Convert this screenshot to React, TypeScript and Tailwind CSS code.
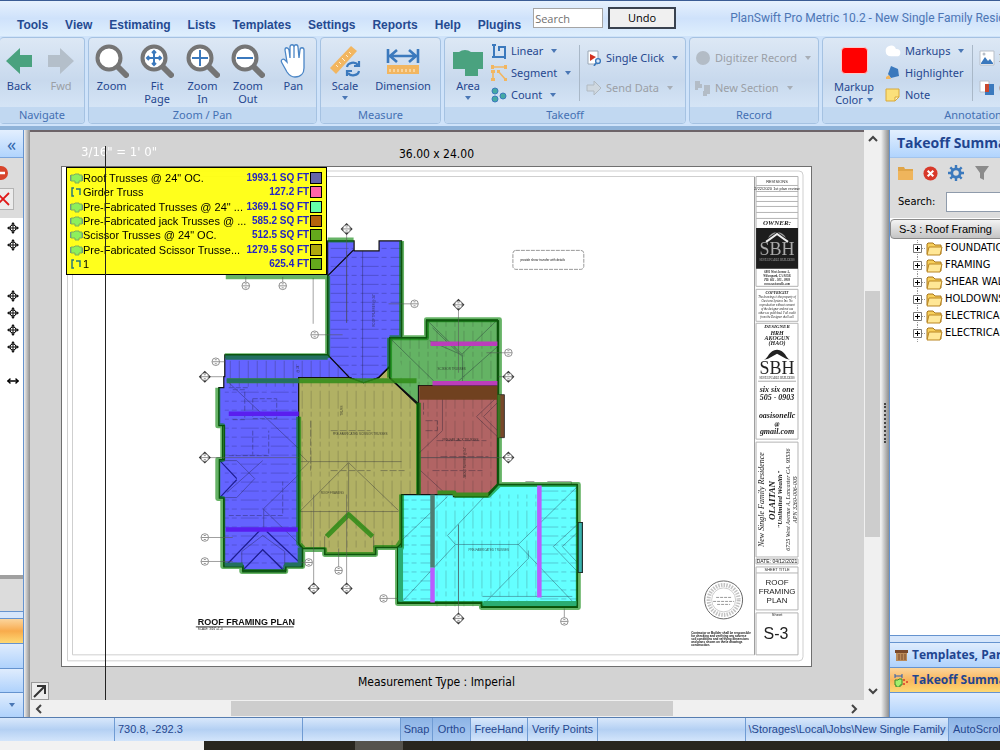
import React from "react";
import { Cloud, MoveHorizontal } from "lucide-react";

const LEGEND = [
  { name: 'Roof Trusses @ 24" OC.', qty: "1993.1 SQ FT", color: "bg-[#6464a8]", area: true },
  { name: "Girder Truss", qty: "127.2 FT", color: "bg-[#ff64a8]", area: false },
  { name: 'Pre-Fabricated Trusses @ 24" ...', qty: "1369.1 SQ FT", color: "bg-[#64ffa8]", area: true },
  { name: "Pre-Fabricated jack Trusses @ ...", qty: "585.2 SQ FT", color: "bg-[#b4640c]", area: true },
  { name: 'Scissor Trusses @ 24" OC.', qty: "512.5 SQ FT", color: "bg-[#64a81c]", area: true },
  { name: "Pre-Fabricated Scissor Trusse...", qty: "1279.5 SQ FT", color: "bg-[#b0a80c]", area: true },
  { name: "1", qty: "625.4 FT", color: "bg-[#64a81c]", area: false },
];

const TREE = ["FOUNDATION", "FRAMING", "SHEAR WALL", "HOLDOWNS", "ELECTRICAL", "ELECTRICAL"];

const MENU = ["Tools", "View", "Estimating", "Lists", "Templates", "Settings", "Reports", "Help", "Plugins"];

// x, y, stem end x, stem end y, section arrow
const BUBBLES: [number, number, number, number, boolean][] = [
  [346, 228, 346, 322, true],
  [414, 303, 388, 303, false],
  [458, 304, 458, 372, true],
  [508, 352, 486, 352, false],
  [508, 376, 498, 376, true],
  [508, 457, 420, 457, true],
  [215, 361, 224, 361, false],
  [204, 376, 222, 376, true],
  [204, 457, 298, 457, true],
  [204, 537, 232, 537, false],
  [204, 561, 232, 561, false],
  [308, 562, 300, 562, false],
  [313, 588, 313, 494, true],
  [346, 588, 346, 494, true],
  [338, 570, 338, 548, false],
  [383, 598, 397, 598, false],
  [458, 618, 458, 524, true],
  [564, 621, 564, 608, false],
  [245, 285, 245, 276, false],
  [282, 285, 282, 276, false],
  [314, 334, 342, 334, false],
];

function Caret({ muted = false }: { muted?: boolean }) {
  return (
    <svg viewBox="0 0 6 4" className={`h-1 w-[6px] shrink-0 ${muted ? "text-[#a8aeb6]" : "text-[#4a77b5]"}`}>
      <path d="M0 0h6L3 4z" fill="currentColor" />
    </svg>
  );
}

function Group({ title, className, children }: { title: string; className: string; children: React.ReactNode }) {
  return (
    <section
      className={`flex h-[87px] shrink-0 flex-col overflow-hidden rounded-sm border border-[#a5c2e2] bg-linear-to-b from-[#dde8f5] via-[#c8d9ed] to-[#dcebfb] ${className}`}
    >
      <div className="flex flex-1 items-start">{children}</div>
      <h2 className="h-4 shrink-0 bg-[#c1d8f1] text-center text-[11px] leading-4 text-[#4470b3]">{title}</h2>
    </section>
  );
}

function BigButton({
  lines,
  children,
  className = "flex-1",
  caret = false,
  muted = false,
}: {
  lines: string[];
  children: React.ReactNode;
  className?: string;
  caret?: boolean;
  muted?: boolean;
}) {
  return (
    <button className={`flex flex-col items-center pt-1 text-[11px] leading-[13px] ${muted ? "text-[#9b9fa6]" : "text-[#25478f]"} ${className}`}>
      <span className="flex h-[37px] items-center justify-center">{children}</span>
      {lines.map((l) => (
        <span key={l}>{l}</span>
      ))}
      {caret && (
        <span className="pt-1">
          <Caret />
        </span>
      )}
    </button>
  );
}

function RowButton({
  label,
  children,
  caret = true,
  muted = false,
}: {
  label: string;
  children: React.ReactNode;
  caret?: boolean;
  muted?: boolean;
}) {
  return (
    <button className={`flex items-center whitespace-nowrap text-[11px] leading-4 ${muted ? "text-[#9b9fa6]" : "text-[#25478f]"}`}>
      <span className="mr-1 flex h-4 w-4 items-center justify-center">{children}</span>
      <span className="mr-2">{label}</span>
      {caret && <Caret muted={muted} />}
    </button>
  );
}

function Lens({ children }: { children?: React.ReactNode }) {
  return (
    <svg viewBox="0 0 34 34" className="h-[34px] w-[34px]">
      <path d="M23 23l8 8" stroke="#757575" strokeWidth="6" strokeLinecap="round" />
      <circle cx="14" cy="14" r="11.5" fill="#fff" stroke="#757575" strokeWidth="4" />
      <g stroke="#3b79bd" strokeWidth="2" fill="none">
        {children}
      </g>
    </svg>
  );
}

function Arrow({ flip = false }: { flip?: boolean }) {
  return (
    <svg viewBox="0 0 28 28" className={`h-7 w-7 ${flip ? "rotate-180 text-[#b4bfca]" : "text-[#4aa27f]"}`}>
      <path d="M1 14L15 1v7h12v12H15v7z" fill="currentColor" />
    </svg>
  );
}

function AreaShape({ className }: { className: string }) {
  return (
    <svg viewBox="0 0 32 32" className={className}>
      <path d="M1 7h6a9 8 0 0 1 12 0h12v17h-5v7H13v-7H1z" fill="currentColor" />
    </svg>
  );
}

function Ribbon() {
  return (
    <div className="flex shrink-0 gap-[3px] overflow-hidden border-b-4 border-[#8fb3d9] bg-[#cfe3fa] pt-px pb-[2px] font-['Noto_Sans',sans-serif]">
      <Group title="Navigate" className="w-[85px] border-l-0">
        <BigButton lines={["Back"]} className="w-[38px]">
          <Arrow />
        </BigButton>
        <BigButton lines={["Fwd"]} muted>
          <Arrow flip />
        </BigButton>
      </Group>
      <Group title="Zoom / Pan" className="w-[229px]">
        <BigButton lines={["Zoom"]}>
          <Lens />
        </BigButton>
        <BigButton lines={["Fit", "Page"]}>
          <Lens>
            <path d="M14 7v14M7 14h14M12 9l2-2 2 2M12 19l2 2 2-2M9 12l-2 2 2 2M19 12l2 2-2 2" />
          </Lens>
        </BigButton>
        <BigButton lines={["Zoom", "In"]}>
          <Lens>
            <path d="M14 6v16M6 14h16" />
          </Lens>
        </BigButton>
        <BigButton lines={["Zoom", "Out"]}>
          <Lens>
            <path d="M6 14h16" />
          </Lens>
        </BigButton>
        <BigButton lines={["Pan"]}>
          <svg viewBox="0 0 27 34" className="h-[34px] w-[27px]">
            <path
              d="M7 18L5 6c0-3 3-3 4 0l1 8V3c0-3 4-3 4 0v11V3c0-3 4-3 4 0l1 11 1-8c0-3 4-3 4 0v18c0 5-3 9-9 9-4 0-6-2-8-5L2 19c-2-3 1-5 3-3z"
              fill="#fff"
              stroke="#4b86c6"
              strokeWidth="1.3"
            />
          </svg>
        </BigButton>
      </Group>
      <Group title="Measure" className="w-[121px]">
        <BigButton lines={["Scale"]} className="w-[48px]" caret>
          <svg viewBox="0 0 32 34" className="h-[34px] w-8">
            <path d="M1 24L22 2l6 5L7 30z" fill="#f2b660" />
            <path d="M7 21l2 2M10 18l2 2M13 14l3 3M17 11l2 2M20 8l2 2" stroke="#fff1d8" />
            <path d="M18 23a6 5 0 0 1 11-2m1-4v5h-5M30 27a6 5 0 0 1-11 2m-1 3v-5h5" fill="none" stroke="#3b79bd" strokeWidth="2.2" />
          </svg>
        </BigButton>
        <BigButton lines={["Dimension"]} className="w-[68px]">
          <svg viewBox="0 0 34 30" className="h-[30px] w-[34px]">
            <path d="M2 3v14M32 3v14M4 10h26M11 4l-7 6 7 6M23 4l7 6-7 6" fill="none" stroke="#3b79bd" strokeWidth="2.6" />
            <path d="M1 19h32v9H1z" fill="#f2b660" />
            <path d="M4 26v-3M8 26v-3M12 26v-3M16 26v-3M20 26v-3M24 26v-3M28 26v-3" stroke="#fff1d8" />
          </svg>
        </BigButton>
      </Group>
      <Group title="Takeoff" className="w-[242px]">
        <BigButton lines={["Area"]} className="w-[46px]" caret>
          <AreaShape className="h-8 w-8 text-[#4aa27f]" />
        </BigButton>
        <div className="flex w-[88px] flex-col gap-[6px] pt-[5px]">
          <RowButton label="Linear">
            <svg viewBox="0 0 16 16" className="h-4 w-4">
              <path d="M3 1v13h11V4H8v4M1 2h4M1 14h4M14 12v4" fill="none" stroke="#3b79bd" strokeWidth="2" />
            </svg>
          </RowButton>
          <RowButton label="Segment">
            <svg viewBox="0 0 16 16" className="h-4 w-4">
              <path d="M2 2h12M2 7v8M7 6l8 9" stroke="#f2b660" strokeWidth="1.6" />
              <path d="M0 0h3v4H0zM13 0h3v4h-3zM0 5h4v3H0zM0 13h4v3H0zM6 5h3v3H6zM13 13h3v3h-3z" fill="#f2b660" />
            </svg>
          </RowButton>
          <RowButton label="Count">
            <svg viewBox="0 0 16 16" className="h-4 w-4" fill="#45a9a3" stroke="#3b79bd">
              <circle cx="4" cy="4" r="3" />
              <circle cx="4" cy="12" r="3" />
              <circle cx="12" cy="9" r="3" />
            </svg>
          </RowButton>
        </div>
        <div className="mt-[7px] h-14 w-px bg-[#a9b8c8]" />
        <div className="flex flex-col gap-[14px] pt-3 pl-[6px]">
          <RowButton label="Single Click">
            <svg viewBox="0 0 16 16" className="h-4 w-4">
              <path d="M2 1h10v13H2z" fill="#fff" stroke="#9aa7b5" />
              <path d="M4 4l6 3-6 4z" fill="#d33220" />
              <circle cx="12" cy="11" r="2.4" fill="#dce8f6" stroke="#3b79bd" strokeWidth="1.4" />
              <path d="M10 13l-2 3" stroke="#3b79bd" strokeWidth="1.6" />
            </svg>
          </RowButton>
          <RowButton label="Send Data" muted>
            <svg viewBox="0 0 16 16" className="h-4 w-4">
              <path d="M1 5h7V1l7 7-7 7v-4H1z" fill="#cfd8e0" stroke="#b1bac2" />
            </svg>
          </RowButton>
        </div>
      </Group>
      <Group title="Record" className="w-[130px]">
        <div className="flex flex-col gap-[14px] pt-3 pl-[5px]">
          <RowButton label="Digitizer Record" muted>
            <svg viewBox="0 0 16 16" className="h-4 w-4">
              <circle cx="8" cy="8" r="7" fill="#b3bcc6" />
            </svg>
          </RowButton>
          <RowButton label="New Section" muted>
            <svg viewBox="0 0 16 16" className="h-4 w-4" fill="#b3bcc6">
              <path d="M0 1h5v3h2v4H3v2H0zM9 5h6v9h-3v2H8v-5h1z" />
            </svg>
          </RowButton>
        </div>
      </Group>
      <Group title="Annotation" className="w-[302px]">
        <button className="flex w-[62px] flex-col items-center pt-[9px] text-[11px] leading-[13px] text-[#25478f]">
          <span className="mb-[6px] h-[27px] w-[27px] rounded-sm border border-[#ffc9c9] bg-[#ff0000]" />
          <span>Markup</span>
          <span className="flex items-center gap-1">
            Color <Caret />
          </span>
        </button>
        <div className="flex w-[87px] flex-col gap-[6px] pt-[5px]">
          <RowButton label="Markups">
            <Cloud className="h-4 w-4 fill-white text-white" />
          </RowButton>
          <RowButton label="Highlighter" caret={false}>
            <svg viewBox="0 0 16 16" className="h-4 w-4">
              <path d="M6 1l7 3 1 7-8 2-3-4z" fill="#3b79bd" />
              <path d="M1 12l3-2 2 4H1z" fill="#f2b660" />
            </svg>
          </RowButton>
          <RowButton label="Note" caret={false}>
            <svg viewBox="0 0 16 16" className="h-4 w-4">
              <path d="M1 2h13v8l-4 4H1z" fill="#fbe07a" stroke="#d9a93a" />
              <path d="M14 10h-4v4z" fill="#fff6cf" stroke="#d9a93a" />
            </svg>
          </RowButton>
        </div>
        <div className="mt-[7px] h-14 w-px bg-[#a9b8c8]" />
        <div className="flex flex-col gap-[14px] pt-3 pl-[6px]">
          <RowButton label="Image" caret={false}>
            <svg viewBox="0 0 16 16" className="h-4 w-4">
              <path d="M1 1h14v14H1z" fill="#fff" stroke="#b8bfc8" />
              <path d="M2 13l4-6 3 4 2-2 3 4v1H2z" fill="#3b79bd" />
              <circle cx="5" cy="4" r="1.5" fill="#b8bfc8" />
            </svg>
          </RowButton>
          <RowButton label="Overlay" caret={false}>
            <svg viewBox="0 0 16 16" className="h-4 w-4">
              <path d="M1 1h9v11H1z" fill="#fff" stroke="#b8bfc8" />
              <path d="M6 4h9v11H6z" fill="#3b79bd" />
              <path d="M6 4h4v8H6z" fill="#c9472c" />
            </svg>
          </RowButton>
        </div>
      </Group>
    </div>
  );
}

function TitleBar() {
  return (
    <header className="flex h-9 shrink-0 items-start overflow-hidden border-t border-[#3a5c94] bg-linear-to-b from-[#e6f1fd] via-[#cfe2fb] to-[#dfeffd]">
      <nav className="flex pt-4 pl-[9px] font-['Liberation_Sans',sans-serif]">
        {MENU.map((m) => (
          <a key={m} href="#" className="pr-[9px] pl-2 text-xs font-bold text-[#254a91]">
            {m}
          </a>
        ))}
      </nav>
      <input
        aria-label="Search"
        placeholder="Search"
        className="mt-[7px] ml-[3px] h-5 w-[70px] shrink-0 border border-[#a5a5a5] bg-white px-px font-['Open_Sans',sans-serif] text-[11px] placeholder:text-[#707070]"
      />
      <button className="mt-[6px] ml-[5px] h-[22px] w-[68px] shrink-0 border-2 border-[#39424f] bg-[#f0f0f0] font-['Open_Sans',sans-serif] text-[11px] leading-4 text-black">
        Undo
      </button>
      <h1 className="pt-[7px] pl-[54px] font-['Roboto',sans-serif] text-xs leading-5 whitespace-nowrap text-[#4d76b5]">
        PlanSwift Pro Metric 10.2 - New Single Family Residence
      </h1>
    </header>
  );
}

function PanIcon() {
  return (
    <svg viewBox="0 0 12 12" className="h-3 w-3">
      <circle cx="6" cy="6" r="3" fill="none" stroke="#111" />
      <path d="M6 1v10M1 6h10" stroke="#111" />
      <path d="M6 0l2 2.500H4zM6 12l2-2.500H4zM0 6l2.500-2v4zM12 6L9.500 4v4z" fill="#111" />
    </svg>
  );
}

function LeftPanel() {
  return (
    <aside className="flex w-6 shrink-0 flex-col overflow-hidden border-r border-[#6593cf] bg-white">
      <button className="h-7 shrink-0 border-b border-[#7aa5dd] bg-linear-to-b from-[#e3effe] to-[#b1d4fd] text-center text-lg leading-5 text-[#3468ad]">
        «
      </button>
      <div className="flex h-[60px] shrink-0 flex-col gap-2 bg-[#dcdcdc] pt-2">
        <svg viewBox="0 0 14 14" className="-ml-[6px] h-[14px] w-[14px]">
          <circle cx="7" cy="7" r="7" fill="#d8452c" />
          <path d="M3 7h8" stroke="#fff" strokeWidth="2.5" />
        </svg>
        <button aria-label="Delete" className="-ml-2 h-[22px] w-[22px] border border-[#b4b4b4] bg-[#ececec]">
          <svg viewBox="0 0 20 20" className="h-5 w-5">
            <path d="M4 4l12 12M16 4L4 16" stroke="#e01818" strokeWidth="1.8" />
          </svg>
        </button>
      </div>
      <div className="flex min-h-0 flex-1 flex-col items-end gap-px pt-[2px] pr-1 text-black">
        {[1, 1, 0, 0, 1, 1, 1, 1, 0, 2].map((kind, i) => (
          <span key={i} className="flex h-4 items-center">
            {kind === 1 && <PanIcon />}
            {kind === 2 && <MoveHorizontal className="h-3 w-3" strokeWidth={3} />}
          </span>
        ))}
      </div>
      <div className="h-9 shrink-0 border-t-4 border-[#a0a0a0] bg-[#dcdcdc]" />
      <div className="h-2 shrink-0 border-y border-[#6593cf] bg-[#d6e6fb]" />
      <div className="h-6 shrink-0 bg-linear-to-b from-[#fbd59b] via-[#f8ab4b] to-[#fdd873]" />
      <div className="h-[25px] shrink-0 border-t border-[#6593cf] bg-linear-to-b from-[#dfecfd] to-[#afd2fc]" />
      <div className="h-6 shrink-0 border-t border-[#6593cf] bg-linear-to-b from-[#dfecfd] to-[#afd2fc]" />
      <div className="flex h-[25px] shrink-0 items-center justify-end border-t border-[#6593cf] bg-linear-to-b from-[#dfecfd] to-[#afd2fc] pr-2">
        <Caret />
      </div>
    </aside>
  );
}

function RoofPlan() {
  return (
    <g>
      <g stroke="#111" strokeWidth="1.2">
        <path
          d="M327 240h26.500v10h25v-10H401v97h-12v29l-11 11-15 5-14-5h-51v166l4 5v18.500h-17v5h-43v-5H223v-69h-4.500v-38.500h5V425H218v-38h5v-11h1v-22h103z"
          fill="#6464ff"
        />
        <path d="M298 377h51l14 5 15-5 11-11v11l28 26v91h-16v49l-4 4h-22v7h-51v-6h-22l-4-5z" fill="#b1b164" />
        <path d="M389 337h37v-18h71v66h-79v18l-29-26z" fill="#64b364" />
        <path d="M418 385h79v99l-10 11h-34v-1h-35z" fill="#b16464" />
        <path d="M401 494h52v2h34l11-12h79v38h5v50h-5v35h-96v-4h-84v-56l4-4z" fill="#64ffff" />
      </g>

      {/* framing members */}
      <path d="M327 240h26v10h25v-10h23v97h-12v29l-11 11-15 5-14-5-22-23z" fill="url(#rows)" opacity=".25" />
      <path d="M224 354h103l22 23h-51v13h-74z" fill="url(#cols)" opacity=".25" />
      <path d="M224 390h74v175h-74zM401 494h31v108h-31zM537 484h40v122h-40z" fill="url(#rows)" opacity=".22" />
      <path d="M298 377h119v117h-16v53H298zM389 337h37v-18h71v175h-79v-91zM432 494h105v112H432z" fill="url(#cols)" opacity=".2" />

      {/* ridges, hips and valleys */}
      <g fill="none" stroke="#1a1a30" strokeWidth="1" opacity=".35">
        <path d="M362 250v132M346 250v72M262 460l-36 32M226 380l72 68M298 474l-35 34v22M298 543l-36-35M220 460h16l18 18-18 19h-16" />
        <path d="M241 565v-14l21-16 22 16v14M241 570l21-20 23 20" />
        <path d="M300 461h101M348 462l50 48M348 462l-49 49h99M348 462v52M324 548v-12l24-23 25 23v11M298 452l10 10-10 10" />
        <path d="M426 319l36 35v30M497 319l-36 35-32-14M389 337l44 43M462 356l-30-29M497 346l-42 37M442 389v41l-24 23M420 470l26 24M420 457h77M497 396l-21 20 21 20M497 402l-14 14 14 14" />
        <path d="M401 602l54-58h63l59-58M455 544l-8-9 38-40M518 544l59 62M481 606l47-48v-8M401 540l46-44M577 524l-24 22 24 25M577 532l-15 14 15 16M458 524v78M482 596h90" />
        <path d="M432 341l60 3M247 387h-20M252 398h24v20h-24zM232 389h12v30h-12M228 455h40v-25M228 515h54v-34M252 430v24" strokeDasharray="5 2" />
        <path d="M432 470h50M425 420h12v10h-12M436 440h50M440 456h48M423 402v12M330 470h40M330 430h40M380 470h24M310 420v50" strokeDasharray="7 2" />
      </g>
      <path d="M327 275l26-26M327 354l22 23 14 5 15-5 11-11M389 377l28 27" fill="none" stroke="#08080f" strokeWidth="1.2" />
      <path d="M299 562l-33-31M227 563l32-33M282 569l-20-20-19 20M219 460l17 18M219 497l17-18" fill="none" stroke="#1c1c90" strokeWidth="1.2" />

      {/* perimeter runs */}
      <g fill="none" strokeLinejoin="round">
        <path
          d="M327 239h26M327 276h-102M327 275v80H224M401 240v97M389 337v40M389 337h37v-18h73v165l-11 11h-34M418 402v92M217 387v38h5v34h-5v39h5v68h19v5h44v-5h17v-19l-4-4V416M302 549h22v5h51v-7h26v-53M401 540l-4 6v57h84v4h97V484h-79"
          stroke="#008000"
          strokeWidth="5"
          opacity=".6"
        />
        <path
          d="M327 276v78H225M401 241v95M389 337v39M389 337h37v-17h72v163l-11 11h-34M418 402v92M222 425v34M223 498v67h19v5h43v-5h16v-18l-3-4V416M302 548h22v6h51v-7h26v-53M398 546v56h83v4h96V484h-79"
          stroke="#0d560d"
          strokeWidth="1.5"
        />
        <path d="M226 380h190M326 536l22-22 24 22" stroke="#2f8c16" strokeWidth="5" opacity=".85" />
        <path d="M225 357h102M226 380h72M299 547v17h-15M224 564h18" stroke="#237060" strokeWidth="4" />
        <path d="M400 547v54M483 603h93" stroke="#2aad72" strokeWidth="5" />
        <path d="M437 492h17v2h34" stroke="#3e8c22" strokeWidth="4" />
      </g>
      <path d="M419 385h78v14h-78z" fill="#70411f" />
      <path d="M498 394h6v43h-6z" fill="#77482a" stroke="#222" strokeWidth=".8" />
      <path d="M497 394h3v43h-3z" fill="#3f7423" />
      <path d="M578 522h4v50h-4z" fill="#37b4b0" stroke="#222" strokeWidth=".8" />
      <g strokeWidth="4.500">
        <path d="M430 343h67M432 382.500h65" stroke="#bb3dbb" />
        <path d="M228 413h70M225 529h72" stroke="#5a1eef" />
        <path d="M432 567v35M539 485v112" stroke="#b95cff" />
        <path d="M432 494v73" stroke="#4f7d72" />
      </g>

      <g fontFamily="Liberation Sans, sans-serif" fontSize="3" fill="#222" opacity=".75">
        <text x="332" y="434">PRE-FABRICATED SCISSOR TRUSSES</text>
        <text x="320" y="493">ROOF FRAMING</text>
        <text x="468" y="551">PRE-FABRICATED TRUSSES</text>
        <text x="437" y="369">SCISSOR TRUSSES</text>
        <text x="442" y="440">PRE-FAB JACK TRUSSES</text>
        <text x="374" y="326" transform="rotate(-90 374 326)">ROOF TRUSSES @ 24"</text>
        <text x="466" y="478" transform="rotate(-90 466 478)">JACK TRUSSES @ 24"</text>
        <text x="342" y="415" transform="rotate(-90 342 415)">TRUSS</text>
        <text x="298" y="372" transform="rotate(-90 298 372)">@ 24"</text>
      </g>
    </g>
  );
}

function TitleBlock() {
  return (
    <g textAnchor="middle" fill="#222">
      <path d="M754.500 176v478.500" stroke="#999" />
      <g fill="none" stroke="#b4b4b4">
        <path d="M756 175.500h42v110h-42zM756 184.500h42M756 190.500h42M756 195.500h42M756 200.500h42M756 205.500h42M756 211.500h42M756 217.500h42" />
        <path d="M756 288.500h42v32h-42zM756 322.500h42v116h-42zM756 441.500h42v115h-42zM756 558.500h42v5h-42zM756 566.500h42v43h-42zM756 572.500h42M756 612.500h42v42h-42z" />
      </g>
      <g fontFamily="Liberation Sans, sans-serif">
        <text x="777" y="182" fontSize="4">REVISIONS</text>
        <text x="777" y="189" fontSize="4">2/22/2020 1st plan review</text>
        <text x="777" y="563" fontSize="5">DATE: 04/12/2021</text>
        <text x="777" y="571" fontSize="4">SHEET TITLE</text>
        <text x="777" y="585" fontSize="8">ROOF</text>
        <text x="777" y="594" fontSize="8">FRAMING</text>
        <text x="777" y="603" fontSize="8">PLAN</text>
        <text x="777" y="616" fontSize="4">Sheet</text>
        <text x="776" y="639" fontSize="16">S-3</text>
      </g>
      <path d="M756 227h42v41h-42z" fill="#1d1d1d" />
      <path d="M766 241l11-8 11 8" fill="none" stroke="#eee" strokeWidth="2" />
      <path d="M768 237a10 10 0 0 1 18 0l-9-6z" fill="#999" />
      <path d="M764 359c4-1 5-10 13-10s9 9 13 10l-4-1-9-5-9 5z" />
      <g fontFamily="Liberation Serif, serif">
        <text x="777" y="254" fontSize="18" fill="#aaa">SBH</text>
        <text x="777" y="260" fontSize="3" fill="#aaa">SUSTAINABLE BUILDERS</text>
        <text x="777" y="373" fontSize="18">SBH</text>
        <text x="777" y="378" fontSize="3">SUSTAINABLE BUILDERS</text>
        <path d="M758 380.500h38" stroke="#aaa" />
      </g>
      <g fontFamily="Liberation Serif, serif" fontStyle="italic" fontWeight="bold">
        <text x="777" y="224" fontSize="7">OWNER:</text>
        <g fontSize="3">
          <text x="777" y="272">6801 West Avenue A,</text>
          <text x="777" y="276">Wilsonpark, CA 93536</text>
          <text x="777" y="280">PH: 661 - 505 - 0903</text>
          <text x="777" y="284">www.oasisonellc.com</text>
          <text x="777" y="293" fontSize="4">COPYRIGHT</text>
          <g fontWeight="normal">
            <text x="777" y="297">The drawings is the property of</text>
            <text x="777" y="301">Oasisone Systems Inc. No</text>
            <text x="777" y="305">reproduction without consent</text>
            <text x="777" y="309">of the designer and not use</text>
            <text x="777" y="313">others as published. Full credit</text>
            <text x="777" y="317">from the Designer shall call</text>
          </g>
        </g>
        <text x="777" y="327" fontSize="5">DESIGNER</text>
        <g fontSize="6">
          <text x="777" y="334">HRH</text>
          <text x="777" y="339">AKOGUN</text>
          <text x="777" y="344">(HAO)</text>
        </g>
        <g fontSize="8">
          <text x="777" y="391">six six one</text>
          <text x="777" y="399">505 - 0903</text>
          <text x="777" y="417">oasisonellc</text>
          <text x="777" y="425" fontSize="6">@</text>
          <text x="777" y="433">gmail.com</text>
        </g>
        <text transform="translate(764 499) rotate(-90)" fontSize="8" fontWeight="normal">
          New Single Family Residence
        </text>
        <text transform="translate(775 500) rotate(-90)" fontSize="9">
          OLAITAN
        </text>
        <text transform="translate(782 499) rotate(-90)" fontSize="7">
          "Unlimited Wealth"
        </text>
        <text transform="translate(790 499) rotate(-90)" fontSize="6" fontWeight="normal">
          6725 West Avenue A, Lancaster CA. 93536
        </text>
        <text transform="translate(797 499) rotate(-90)" fontSize="6" fontWeight="normal">
          APN 3260-006-005
        </text>
      </g>
    </g>
  );
}

function Sheet() {
  return (
    <svg viewBox="61 166 750 500" className="block w-full border border-[#6f6f6f] bg-white">
      <defs>
        <pattern id="rows" width="30" height="9" patternUnits="userSpaceOnUse">
          <path d="M0 4.500h18M21 4.500h5" stroke="#101040" />
        </pattern>
        <pattern id="cols" width="9" height="30" patternUnits="userSpaceOnUse">
          <path d="M4.500 0v18M4.500 21v5" stroke="#202020" />
        </pattern>
      </defs>
      <path d="M66.500 171v489.500M66.500 660.500H799q4 0 4-4V174q0-4-4-4H66" fill="none" stroke="#cfcfcf" />
      <path d="M71.500 175.500V654.500H755M71 175.500h684" fill="none" stroke="#cfcfcf" />

      <g stroke="#8b8b8b" strokeWidth=".8">
        <path d="M312.500 277v46M525 481h9M547 481h24v3" fill="none" />
      </g>
      <RoofPlan />
      <g stroke="#555" strokeWidth=".8" opacity=".7">
        {BUBBLES.map(([x, y, x2, y2], i) => (
          <path key={i} d={`M${x} ${y}L${x2} ${y2}`} />
        ))}
      </g>
      {BUBBLES.map(([x, y, , , arrow], i) => (
        <g key={i}>
          {arrow && <path d={`M${x - 6} ${y}l6-6 6 6-6 6z`} fill="#333" />}
          <circle cx={x} cy={y} r="3.8" fill="#fff" stroke="#777" strokeWidth=".8" />
          <path d={`M${x - 3.5} ${y}h7M${x - 1} ${y - 2}h2M${x - 1} ${y + 2}h2`} stroke="#777" strokeWidth=".8" />
        </g>
      ))}

      <rect x="512.500" y="249.500" width="71" height="19" rx="3" fill="none" stroke="#999" strokeDasharray="4 1" />
      <g fontFamily="Liberation Sans, sans-serif" fill="#111">
        <text x="520" y="260" fontSize="3">
          provide shear transfer with details
        </text>
        <text x="197" y="625" fontSize="9" fontWeight="bold">
          ROOF FRAMING PLAN
        </text>
        <path d="M195 626.500h98" stroke="#333" />
        <text x="197" y="630" fontSize="3">
          SCALE: 3/16"=1'-0
        </text>
        <g fontSize="3" fontWeight="bold">
          <text x="691" y="634">Contractor or Builder shall be responsible</text>
          <text x="691" y="637">for checking and verifying any adverse</text>
          <text x="691" y="640">soil conditions and verifying dimensions</text>
          <text x="691" y="643">and plans shown on these drawings</text>
          <text x="691" y="646">construction.</text>
        </g>
      </g>
      <g fill="none" stroke="#999">
        <circle cx="723.500" cy="599.500" r="19" stroke="#666" />
        <circle cx="723.500" cy="599.500" r="15" strokeWidth="4" strokeDasharray="1.500 1.200" opacity=".6" />
        <circle cx="723.500" cy="599.500" r="12" strokeWidth=".5" />
        <path d="M716 597h15M713 601h21M717 604h13" strokeDasharray="3 1" />
      </g>
      <TitleBlock />
    </svg>
  );
}

function Legend() {
  return (
    <div className="absolute top-px left-[5px] h-[108px] w-[261px] border border-black bg-[#ffff10]/95 py-[3px]">
      <table className="h-full w-full font-['Liberation_Sans',sans-serif] text-[11px] leading-[14px] text-black">
        <tbody>
          {LEGEND.map((row) => (
            <tr key={row.name}>
              <td className="w-[17px] pl-[3px]">
                {row.area ? (
                  <svg viewBox="0 0 13 12" className="h-3 w-[13px]">
                    <path d="M1 3h3l1-1h4v1h3v6h-3v2H5V9H1z" fill="#8df05c" stroke="#7fae5a" />
                    <path d="M.5 3v6M12.500 4v5" stroke="#6f9a86" />
                  </svg>
                ) : (
                  <svg viewBox="0 0 12 12" className="h-3 w-3">
                    <path d="M4 2H2v8h2M6 3h4v6" fill="none" stroke="#2c7a7a" strokeWidth="1.500" />
                  </svg>
                )}
              </td>
              <td className="whitespace-nowrap">{row.name}</td>
              <td className="text-right text-[10px] font-bold whitespace-nowrap text-[#2424c4]">{row.qty}</td>
              <td className="w-[17px] pr-1">
                <div className={`ml-px h-3 w-3 border border-black ${row.color}`} />
              </td>
            </tr>
          ))}
        </tbody>
      </table>
    </div>
  );
}

function Chevron({ d }: { d: string }) {
  return (
    <svg viewBox="0 0 10 10" className="h-[10px] w-[10px]">
      <path d={d} fill="none" stroke="#444" strokeWidth="2" />
    </svg>
  );
}

function Viewport() {
  return (
    <main className="flex min-w-0 flex-1 flex-col">
      <div className="flex min-h-0 flex-1">
        <div className="relative min-w-0 flex-1 overflow-hidden border-t-2 border-[#6d6468] bg-[#d3d3d3] pr-[52px] pl-[31px] font-['DejaVu_Sans_Condensed','DejaVu_Sans',sans-serif] text-xs text-black">
          <p className="pt-3 pb-[2px] text-center leading-5">36.00 x 24.00</p>
          <div className="relative">
            <Sheet />
            <Legend />
          </div>
          <p className="pt-[5px] text-center leading-5">Measurement Type : Imperial</p>
          <span className="absolute top-[10px] left-[51px] text-[13px] leading-5 text-white">3/16" = 1' 0"</span>
          <div className="absolute top-[14px] bottom-0 left-[75px] w-px bg-[#222]" />
          <button
            aria-label="Restore view"
            className="absolute bottom-0 left-px flex h-[18px] w-[18px] items-center justify-center border border-[#999] bg-[#ececec]"
          >
            <svg viewBox="0 0 14 14" className="h-[14px] w-[14px]">
              <path d="M1 13L12 2M4 2h8v8" fill="none" stroke="#333" strokeWidth="2" />
            </svg>
          </button>
        </div>
        <div className="flex w-[17px] shrink-0 flex-col items-center bg-[#f0f0f0] py-1">
          <Chevron d="M1 7l4-4 4 4" />
          <div className="flex min-h-0 w-[15px] flex-1 flex-col">
            <div className="flex-[147]" />
            <div className="flex-[245] bg-[#cdcdcd]" />
            <div className="flex-[149]" />
          </div>
          <Chevron d="M1 3l4 4 4-4" />
        </div>
      </div>
      <div className="flex h-[17px] shrink-0 items-center bg-[#f0f0f0] pr-[22px] pl-1">
        <Chevron d="M7 1L3 5l4 4" />
        <div className="flex h-[15px] min-w-0 flex-1">
          <div className="flex-[187]" />
          <div className="flex-[442] bg-[#cdcdcd]" />
          <div className="flex-[176]" />
        </div>
        <Chevron d="M3 1l4 4-4 4" />
      </div>
    </main>
  );
}

function FolderIcon() {
  return (
    <svg viewBox="0 0 17 14" className="mr-[2px] h-[14px] w-[17px] shrink-0">
      <path d="M1 12V2l1-1h5l2 2h6v9z" fill="#f7cf5a" stroke="#a8761c" />
      <path d="M3 5h13l-2 8H1z" fill="#ffe796" stroke="#b98522" />
    </svg>
  );
}

function RightPanel() {
  return (
    <aside className="flex w-[111px] shrink-0 flex-col overflow-hidden border-l border-[#6593cf] bg-white whitespace-nowrap">
      <h2 className="h-7 shrink-0 border-b border-[#a3c4ec] bg-linear-to-b from-[#e3effe] to-[#b1d4fd] pl-[7px] font-['Open_Sans',sans-serif] text-[14px] leading-[26px] font-bold text-[#1f4590]">
        Takeoff Summary
      </h2>
      <div className="h-[60px] shrink-0 bg-[#dcdcdc] pt-[7px] pl-2">
        <div className="flex items-center gap-[10px]">
          <svg viewBox="0 0 15 14" className="h-[14px] w-[15px] shrink-0">
            <path d="M0 1h6l1 2h8v11H0z" fill="#e0a548" />
            <path d="M0 5h15v9H0z" fill="#efb55c" />
          </svg>
          <svg viewBox="0 0 16 16" className="h-[15px] w-[15px] shrink-0">
            <circle cx="8" cy="8" r="7.500" fill="#d8392a" />
            <path d="M5 5l6 6M11 5l-6 6" stroke="#fff" strokeWidth="2.2" />
          </svg>
          <svg viewBox="0 0 16 16" className="h-4 w-4 shrink-0" stroke="#3b79bd" fill="none">
            <path d="M8 0v3M8 13v3M0 8h3M13 8h3M2.300 2.300l2.200 2.200M11.500 11.500l2.200 2.200M13.700 2.300l-2.200 2.200M4.500 11.500l-2.200 2.200" strokeWidth="2.400" />
            <circle cx="8" cy="8" r="4.200" strokeWidth="2.800" />
          </svg>
          <svg viewBox="0 0 16 16" className="h-4 w-4 shrink-0">
            <path d="M1 1h14L10 8v7l-4-2V8z" fill="#8b8b8b" />
          </svg>
        </div>
        <label className="mt-[11px] flex items-center font-['DejaVu_Sans_Condensed','DejaVu_Sans',sans-serif] text-[11px] text-black">
          <span className="w-12 shrink-0">Search:</span>
          <input className="h-5 w-40 shrink-0 border border-[#8f9bab] bg-white" />
        </label>
      </div>
      <div className="mt-px h-5 w-56 shrink-0 rounded-sm border border-[#8a8a8a] bg-linear-to-b from-[#f4f4f4] to-[#c4c4c4] pl-2 font-['Liberation_Sans',sans-serif] text-[11px] leading-[18px] text-black">
        S-3 : Roof Framing
      </div>
      <ul className="min-h-0 flex-1 pt-px pl-[23px] font-['DejaVu_Sans_Condensed','DejaVu_Sans',sans-serif] text-[11px] text-black">
        {TREE.map((name, i) => (
          <li key={i} className="flex h-[17px] items-center">
            <svg viewBox="0 0 13 17" className="h-[17px] w-[13px] shrink-0">
              <path d="M4.500 0v17M9 8.500h4" stroke="#999" strokeDasharray="1 1" />
              <path d="M.5 4.500h8v8h-8z" fill="#fff" stroke="#777" />
              <path d="M2 8.500h5M4.500 6v5" stroke="#000" />
            </svg>
            <FolderIcon />
            {name}
          </li>
        ))}
      </ul>
      <div className="h-2 shrink-0 border-y border-[#6593cf] bg-[#d6e6fb]" />
      <button className="flex h-6 shrink-0 items-center gap-1 bg-linear-to-b from-[#dfecfd] to-[#afd2fc] pl-[5px] font-['Open_Sans',sans-serif] text-xs font-bold text-[#1f4590]">
        <svg viewBox="0 0 13 12" className="h-3 w-[13px] shrink-0">
          <path d="M0 1h13v3H0z" fill="#7a4a2c" />
          <path d="M1 4h11v8H1z" fill="#b98a5a" />
          <path d="M4 5v6M7 5v6M10 5v6" stroke="#7a4a2c" />
        </svg>
        Templates, Parts
      </button>
      <button className="flex h-[25px] shrink-0 items-center gap-1 border-t border-[#6593cf] bg-linear-to-b from-[#fbd59b] via-[#f8b65c] to-[#fdd873] pl-1 font-['Open_Sans',sans-serif] text-xs font-bold text-[#1f4590]">
        <svg viewBox="0 0 14 13" className="h-[13px] w-[14px] shrink-0">
          <path d="M1 0v4M8 0v4M1 2h7" stroke="#2a5cb0" />
          <path d="M1 6h3l1-1h3v6H6v2H2v-2H1z" fill="#a4ee6c" stroke="#3d8a2c" />
          <circle cx="10" cy="6" r="1" fill="#d8392a" />
          <circle cx="13" cy="8" r="1" fill="#d8392a" />
          <circle cx="10" cy="10" r="1" fill="#d8392a" />
        </svg>
        Takeoff Summary
      </button>
      <div className="h-[25px] shrink-0 border-t border-[#6593cf] bg-linear-to-b from-[#dfecfd] to-[#afd2fc]" />
    </aside>
  );
}

function StatusBar() {
  const cell = "flex shrink-0 items-center justify-center border-l border-[#6f9bd3]";
  const on = "bg-linear-to-b from-[#8db4e6] to-[#a9c9f1]";
  return (
    <footer className="flex h-6 shrink-0 overflow-hidden border-t border-[#567db0] bg-linear-to-b from-[#d9e8fb] via-[#b4d0f3] to-[#d3e5fb] font-['Liberation_Sans',sans-serif] text-[11px] whitespace-nowrap text-[#25478f]">
      <div className="w-[114px] shrink-0" />
      <div className="flex w-[188px] shrink-0 items-center border-l border-[#6f9bd3] pl-[3px]">730.8, -292.3</div>
      <div className="w-[98px] shrink-0 border-l border-[#6f9bd3]" />
      <button className={`w-8 ${cell} ${on}`}>Snap</button>
      <button className={`w-[38px] ${cell} ${on}`}>Ortho</button>
      <button className={`w-[57px] ${cell}`}>FreeHand</button>
      <button className={`w-[70px] ${cell}`}>Verify Points</button>
      <div className="min-w-0 flex-1 border-l border-[#6f9bd3]" />
      <div className={`w-[203px] ${cell}`}>\Storages\Local\Jobs\New Single Family</div>
      <button className={`w-[52px] ${cell} ${on}`}>
        <span className="w-full overflow-hidden pl-1 text-left">AutoScroll</span>
      </button>
    </footer>
  );
}

export default function App() {
  return (
    <div className="flex h-screen flex-col overflow-hidden bg-[#d3d3d3]">
      <TitleBar />
      <Ribbon />
      <div className="flex min-h-0 flex-1">
        <LeftPanel />
        <div className="w-[6px] shrink-0 bg-linear-to-r from-[#f0f0f0] to-[#8f8f8f]" />
        <Viewport />
        <div className="flex w-2 shrink-0 items-start justify-center bg-linear-to-r from-[#f0f0f0] to-[#8f8f8f]">
          <div className="mt-[273px] h-10 border-l-2 border-dotted border-[#444]" />
        </div>
        <RightPanel />
      </div>
      <StatusBar />
      <div className="flex h-[9px] shrink-0 bg-[#28261f]">
        <div className="w-[204px] bg-[#f2f2f2]" />
        <div className="ml-[151px] w-12 bg-[#55534d]" />
      </div>
    </div>
  );
}
